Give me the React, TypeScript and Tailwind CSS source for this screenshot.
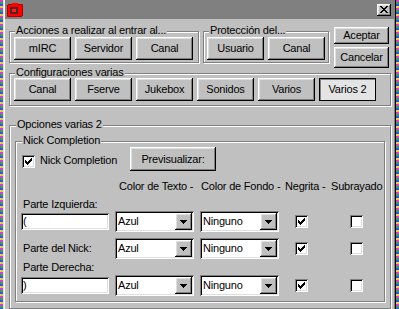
import React from 'react';

// win98-ish bevels
const raised = 'bg-[#c0c0c0] shadow-[inset_-1px_-1px_0_#000,inset_1px_1px_0_#fff,inset_-2px_-2px_0_#808080,inset_2px_2px_0_#dfdfdf]';
const sunken = 'bg-white shadow-[inset_1px_1px_0_#808080,inset_-1px_-1px_0_#fff,inset_2px_2px_0_#000,inset_-2px_-2px_0_#dfdfdf]';
const etched = 'border border-[#808080] shadow-[inset_1px_1px_0_#fff,1px_1px_0_#fff]';
const noise = 'bg-[repeating-linear-gradient(180deg,#d040d0_0px,#d040d0_2px,#30a060_2px,#30a060_4px,#4050e0_4px,#4050e0_6px,#e0d040_6px,#e0d040_8px)]';

type BtnProps = { label: string; w?: string; h?: string; pressed?: boolean };

const Btn: React.FC<BtnProps> = ({ label, w = 'w-[57px]', h = 'h-[23px]', pressed }) => (
    <div
        className={`${w} ${h} shrink-0 flex items-center justify-center ${
            pressed ? 'bg-[#e4e4e4] border border-black shadow-[inset_1px_1px_0_#808080]' : raised
        }`}
    >
        {label}
    </div>
);

const Group: React.FC<{ title: string; className?: string; labelCls?: string; children: React.ReactNode }> = ({
    title,
    className = '',
    labelCls = 'ml-[5px]',
    children,
}) => (
    <div className={`flex flex-col ${etched} ${className}`}>
        <span className={`-mt-[7px] ${labelCls} px-[1px] self-start bg-[#c0c0c0] whitespace-nowrap`}>{title}</span>
        {children}
    </div>
);

const Check: React.FC<{ checked?: boolean }> = ({ checked }) => (
    <div className={`w-[13px] h-[13px] shrink-0 flex items-center justify-center ${sunken}`}>
        {checked && (
            <svg width="7" height="7" viewBox="0 0 7 7" shapeRendering="crispEdges">
                <path
                    d="M6 0h1v1h-1zM5 1h2v1h-2zM0 2h1v1H0zM4 2h3v1H4zM0 3h2v1H0zM3 3h3v1H3zM0 4h5v1H0zM1 5h3v1H1zM2 6h1v1H2z"
                    fill="#000"
                />
            </svg>
        )}
    </div>
);

const Select: React.FC<{ value: string }> = ({ value }) => (
    <div className={`w-[79px] h-[21px] shrink-0 p-[2px] flex ${sunken}`}>
        <div className="flex-1 flex items-center pl-[1px]">{value}</div>
        <div className={`w-[17px] h-full flex items-center justify-center ${raised}`}>
            <svg width="7" height="4" viewBox="0 0 7 4" shapeRendering="crispEdges">
                <path d="M0 0h7v1H0zM1 1h5v1H1zM2 2h3v1H2zM3 3h1v1H3z" fill="#000" />
            </svg>
        </div>
    </div>
);

const TextBox: React.FC<{ value: string }> = ({ value }) => (
    <div className={`w-[88px] h-[17px] flex items-center pl-[2px] ${sunken}`}>{value}</div>
);

const Row: React.FC<{ first: React.ReactNode; className?: string }> = ({ first, className = '' }) => (
    <div className={`flex items-center h-[21px] pl-[5px] ${className}`}>
        <div className="w-[94px] shrink-0">{first}</div>
        <Select value="Azul" />
        <div className="ml-[6px]">
            <Select value="Ninguno" />
        </div>
        <div className="ml-[16px]">
            <Check checked />
        </div>
        <div className="ml-[42px]">
            <Check />
        </div>
    </div>
);

export default function App() {
    return (
        <div className="flex w-[399px] h-[309px] overflow-hidden font-['Liberation_Sans',Arial,sans-serif] text-[11px] tracking-[-0.2px] leading-none text-black">
            <div className={`w-[3px] shrink-0 ${noise}`} />
            <div className="w-[393px] shrink-0 flex flex-col bg-[#c0c0c0] border-x border-l-[#dfdfdf] border-r-black shadow-[inset_1px_0_0_#fff,inset_-1px_0_0_#808080] px-[1px]">
                {/* title bar */}
                <div className="h-[19px] shrink-0 bg-[#808080] flex items-center justify-between pl-[2px] pr-[3px]">
                    <svg width="16" height="14" viewBox="0 0 16 14" shapeRendering="crispEdges">
                        <rect x="0" y="1" width="16" height="13" rx="2" fill="#ff0000" />
                        <rect x="0.5" y="1.5" width="15" height="12" rx="2" fill="none" stroke="#b00000" strokeWidth="1" />
                        <rect x="5" y="0" width="6" height="2" fill="#ff0000" />
                        <rect x="3" y="4" width="8" height="7" fill="#5a2020" />
                        <rect x="5" y="6" width="4" height="3" fill="#ff2020" />
                    </svg>
                    <div className={`w-[14px] h-[12px] flex items-center justify-center ${raised}`}>
                        <svg width="8" height="7" viewBox="0 0 8 7" shapeRendering="crispEdges">
                            <path
                                d="M0 0h2v1H0zM6 0h2v1H6zM1 1h2v1H1zM5 1h2v1H5zM2 2h4v1H2zM3 3h2v1H3zM2 4h4v1H2zM1 5h2v1H1zM5 5h2v1H5zM0 6h2v1H0zM6 6h2v1H6z"
                                fill="#000"
                            />
                        </svg>
                    </div>
                </div>

                <div className="flex flex-col pl-[4px] pr-[3px]">
                    {/* top row */}
                    <div className="flex items-start">
                        <Group title="Acciones a realizar al entrar al..." className="mt-[12px] w-[190px]">
                            <div className="flex gap-[4px] pl-[4px] mt-[1px] pb-[2px]">
                                <Btn label="mIRC" />
                                <Btn label="Servidor" />
                                <Btn label="Canal" />
                            </div>
                        </Group>
                        <Group title="Protección del..." className="ml-[4px] mt-[12px] w-[126px]">
                            <div className="flex gap-[4px] pl-[3px] mt-[1px] pb-[2px]">
                                <Btn label="Usuario" />
                                <Btn label="Canal" />
                            </div>
                        </Group>
                        <div className="ml-[5px] mt-[8px] flex flex-col gap-[3px]">
                            <Btn label="Aceptar" w="w-[55px]" h="h-[17px]" />
                            <Btn label="Cancelar" w="w-[55px]" h="h-[21px]" />
                        </div>
                    </div>

                    <Group title="Configuraciones varias" className="mt-[5px]">
                        <div className="flex gap-[4px] pl-[4px] pb-[4px]">
                            <Btn label="Canal" />
                            <Btn label="Fserve" />
                            <Btn label="Jukebox" />
                            <Btn label="Sonidos" />
                            <Btn label="Varios" />
                            <Btn label="Varios 2" pressed />
                        </div>
                    </Group>

                    <Group title="Opciones varias 2" className="mt-[19px] px-[5px] pb-[6px]" labelCls="ml-[1px]">
                        <Group title="Nick Completion" className="mt-[11px] pb-[5px]" labelCls="ml-[6px]">
                            <div className="flex items-start pl-[6px] mt-[1px]">
                                <div className="mt-[8px]">
                                    <Check checked />
                                </div>
                                <span className="ml-[5px] mt-[8px] w-[90px] whitespace-nowrap">Nick Completion</span>
                                <Btn label="Previsualizar:" w="w-[86px]" h="h-[24px]" />
                            </div>

                            <div className="flex mt-[10px] whitespace-nowrap">
                                <span className="ml-[103px] w-[82px]">Color de Texto -</span>
                                <span className="w-[84px]">Color de Fondo -</span>
                                <span className="w-[46px]">Negrita -</span>
                                <span>Subrayado</span>
                            </div>

                            <span className="mt-[7px] pl-[7px]">Parte Izquierda:</span>
                            <Row first={<TextBox value="(" />} className="mt-[1px]" />
                            <Row first={<span className="pl-[2px] whitespace-nowrap">Parte del Nick:</span>} className="mt-[6px]" />
                            <span className="mt-[3px] pl-[7px]">Parte Derecha:</span>
                            <Row first={<TextBox value=")" />} className="mt-[2px]" />
                        </Group>
                    </Group>
                </div>
            </div>
            <div className={`w-[3px] shrink-0 ${noise}`} />
        </div>
    );
}
